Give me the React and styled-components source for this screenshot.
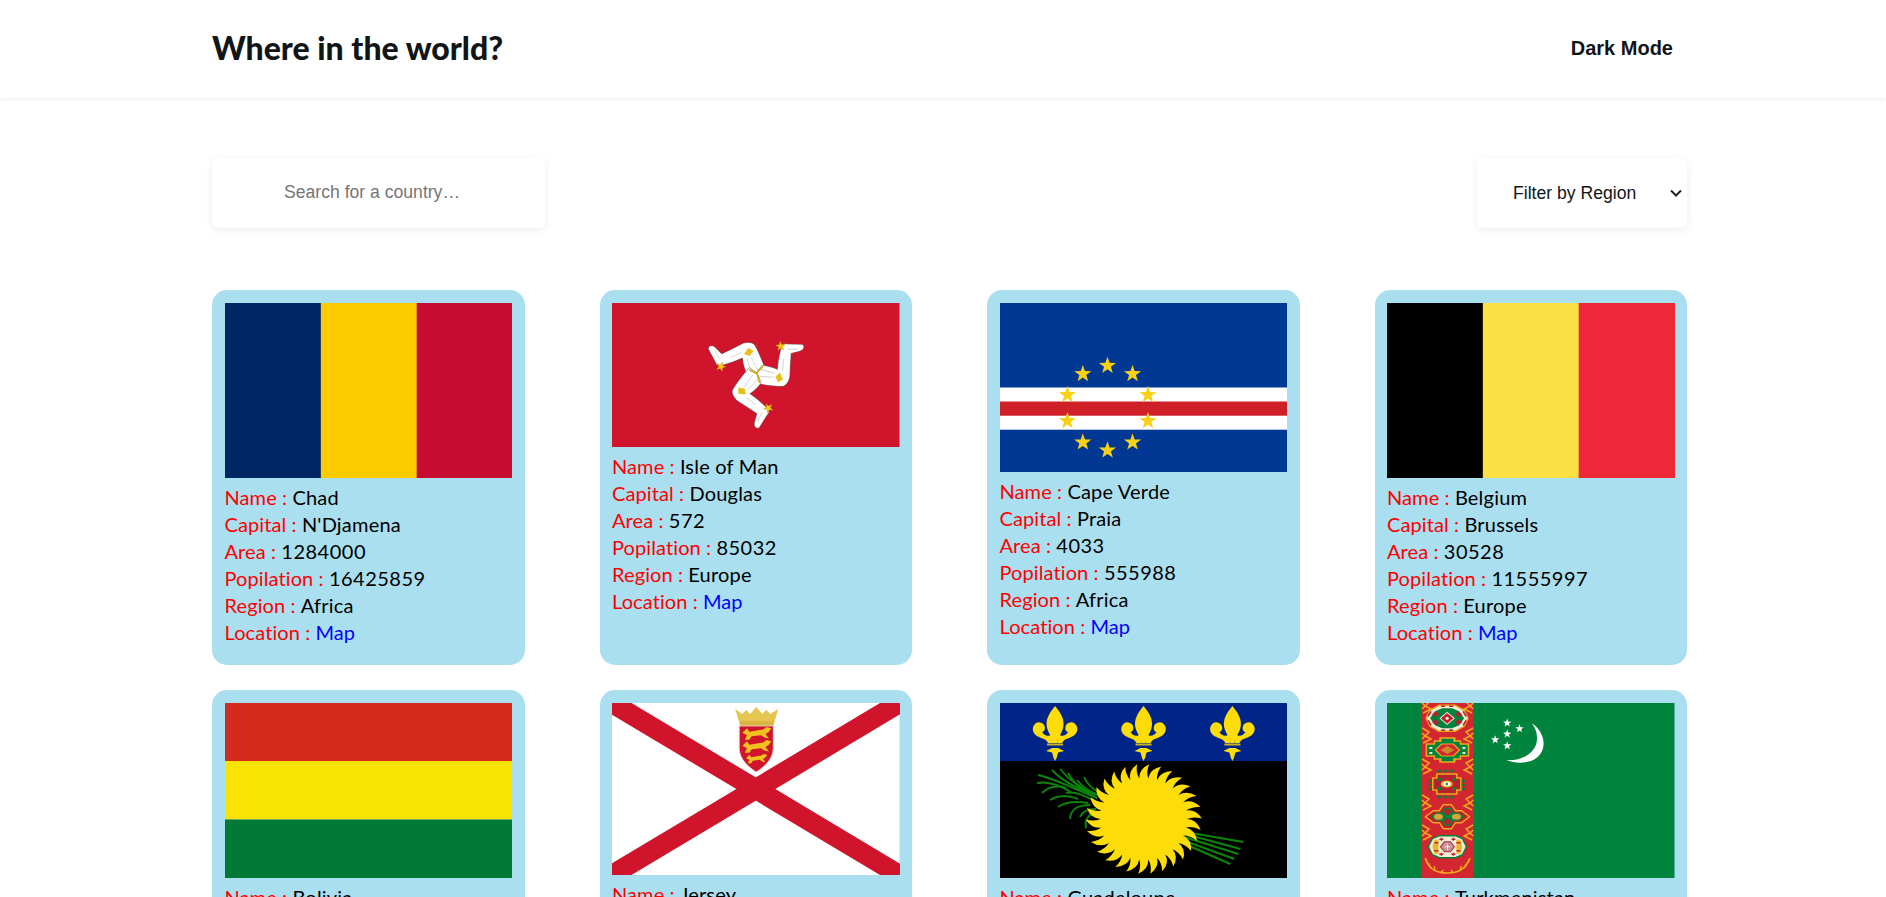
import React from "react"
import styled, { createGlobalStyle } from "styled-components"

const GlobalStyle = createGlobalStyle`
    * { box-sizing: border-box; }
    body {
        margin: 0;
        background: #fff;
        color: #000;
        font-family: "Lato", "Noto Sans", sans-serif;
    }
`
const Header = styled.header`
    height: 98px;
    padding: 0 213px 0 212px;
    display: flex;
    align-items: center;
    justify-content: space-between;
    background: #fff;
    box-shadow: 0 2px 4px rgba(0, 0, 0, 0.06);
`
const Title = styled.h1`
    margin: 0 0 4px;
    font-size: 32px;
    font-weight: 900;
    color: #111517;
`
const ModeButton = styled.button`
    margin-bottom: 2px;
    padding: 0;
    border: 0;
    background: none;
    font-family: "Liberation Sans", Arial, sans-serif;
    font-size: 20px;
    font-weight: 700;
    color: #111517;
`
const Main = styled.main`
    padding: 60px 199px 0 212px;
`
const Controls = styled.div`
    display: flex;
    justify-content: space-between;
    margin-bottom: 62px;
`
const SearchInput = styled.input`
    width: 333px;
    height: 70px;
    padding: 0 0 1px 72px;
    border: 0;
    border-radius: 6px;
    outline: none;
    background: #fff;
    box-shadow: 0 2px 9px rgba(0, 0, 0, 0.07);
    font-family: "Liberation Sans", Arial, sans-serif;
    font-size: 17.6px;
`
const SelectWrap = styled.div`
    position: relative;
    width: 210px;
    height: 70px;
`
const RegionSelect = styled.select`
    appearance: none;
    width: 100%;
    height: 100%;
    padding: 0 24px 0 36px;
    border: 0;
    border-radius: 6px;
    outline: none;
    background: #fff;
    box-shadow: 0 2px 9px rgba(0, 0, 0, 0.07);
    font-family: "Liberation Sans", Arial, sans-serif;
    font-size: 17.6px;
    color: #111517;
`
const Chevron = styled.svg`
    position: absolute;
    top: 31px;
    right: 5px;
    width: 12px;
    height: 8px;
    pointer-events: none;
`
const Grid = styled.section`
    display: grid;
    grid-template-columns: repeat(4, 1fr);
    gap: 25px 75px;
`
const Card = styled.article`
    padding: 13px 12.5px;
    border-radius: 15px;
    background: #aadff0;
`
const FlagSvg = styled.svg`
    display: block;
    width: 100%;
    height: ${props => props.$h}px;
    margin-bottom: 6px;
`
const Info = styled.div`
    padding-bottom: 6px;
    font-size: 20px;
    line-height: 27px;
`
const Line = styled.div`
    white-space: nowrap;
`
const Label = styled.span`
    color: #ff0000;
    letter-spacing: 0.1px;
`
const Value = styled.span`
    letter-spacing: ${props => (props.$number ? "0.5px" : "0.2px")};
`
const MapLink = styled.a`
    color: #0000ff;
    text-decoration: none;
`

// star polygon points, used by several of the flags
const star = (cx, cy, r, rot = 0) => {
    const pts = []
    for (let i = 0; i < 10; i++) {
        const rad = i % 2 ? r * 0.4 : r
        const a = ((i * 36 - 90 + rot) * Math.PI) / 180
        pts.push(`${(cx + rad * Math.cos(a)).toFixed(2)},${(cy + rad * Math.sin(a)).toFixed(2)}`)
    }
    return pts.join(" ")
}

const sunPath = () => {
    const n = 30
    let d = ""
    for (let i = 0; i < n; i++) {
        const a0 = (i / n) * Math.PI * 2
        const a1 = ((i + 1) / n) * Math.PI * 2
        const tip = a0 + 0.2
        const pt = (a, r) => `${(r * Math.cos(a)).toFixed(2)} ${(r * Math.sin(a)).toFixed(2)}`
        d += i === 0 ? `M${pt(a0, 43)} ` : ""
        d += `Q${pt(a0 + 0.01, 53)} ${pt(tip, 58)} Q${pt(a0 + 0.15, 50)} ${pt(a1, 43)} `
    }
    return d + "Z"
}

const Bars = ({ colors }) => (
    <FlagSvg $h={175} viewBox="0 0 287 175" preserveAspectRatio="none">
        {colors.map((c, i) => (
            <rect key={c} x={(i * 287) / 3} y="0" width={287 / 3 + 0.5} height="175" fill={c} />
        ))}
    </FlagSvg>
)

const Bolivia = () => (
    <FlagSvg $h={175} viewBox="0 0 287 175" preserveAspectRatio="none">
        <rect width="287" height="58.5" fill="#D52B1E" />
        <rect y="58" width="287" height="58.5" fill="#F9E300" />
        <rect y="116.5" width="287" height="58.5" fill="#007934" />
    </FlagSvg>
)

const LEG_PATH = "M201 127 C194 108 188 92 191 78 C170 88 150 96 127 102 L112 102 C106 88 96 72 88 56 C90 48 98 50 104 56 L124 76 C145 66 165 56 182 47 C194 39 214 38 221 48 C234 70 244 98 252 120 L228 130 Z"

const Leg = ({ rot }) => (
    <g transform={`rotate(${rot} 229 131)`}>
        <path d={LEG_PATH} fill="#fff" stroke="#777" strokeWidth="8" strokeLinejoin="round" />
        <path d={LEG_PATH} fill="#fff" stroke="#fff" strokeWidth="5" strokeLinejoin="round" />
        <path d="M191 72 L204 54 L220 62 L208 78 Z" fill="#e8c01c" />
        <path d="M200 125 L228 132 L250 118" fill="none" stroke="#d3a90f" strokeWidth="5" />
        <path d="M104 62 L119 87 M150 83 L182 68 M212 80 L232 120 M200 84 L212 125" stroke="#c4c4c4" strokeWidth="2" fill="none" />
        <polygon points={star(122, 110, 15, 20)} fill="#f5cf10" stroke="#b8860b" strokeWidth="1" />
    </g>
)

const IsleOfMan = () => (
    <FlagSvg $h={144} viewBox="0 0 287 144" preserveAspectRatio="none">
        <rect width="287" height="144" fill="#CF142B" />
        <g transform="translate(68 27) scale(0.3333)">
            <Leg rot={0} />
            <Leg rot={120} />
            <Leg rot={240} />
        </g>
    </FlagSvg>
)

const VERDE_STARS = [
    [107.3, 62.7], [82.7, 71], [132.3, 71], [67.3, 92], [147.7, 92],
    [67.3, 118], [147.7, 118], [82.7, 139.3], [132.3, 139.3], [107.3, 147.3],
]

const CapeVerde = () => (
    <FlagSvg $h={169} viewBox="0 0 287 169" preserveAspectRatio="none">
        <rect width="287" height="169" fill="#003893" />
        <rect y="84.5" width="287" height="42.2" fill="#fff" />
        <rect y="98.5" width="287" height="14.2" fill="#CF2027" />
        {VERDE_STARS.map(([x, y]) => (
            <polygon key={`${x}-${y}`} points={star(x, y, 9)} fill="#F7D116" />
        ))}
    </FlagSvg>
)

const Lion = ({ y, w }) => (
    <g transform={`translate(144 ${y}) scale(${w})`} fill="#f1c21e">
        <path d="M-12 -1 L-8 -5 L-6 -2 L6 -4 L9 -6 L13 -5 L11 -2 L8 0 L11 4 L7 3 L4 1 L-4 2 L-6 5 L-10 5 L-8 1 Z" />
    </g>
)

const Jersey = () => (
    <FlagSvg $h={172} viewBox="0 0 287 172" preserveAspectRatio="none">
        <rect width="287" height="172" fill="#fff" />
        <path d="M0 0 L287 172 M287 0 L0 172" stroke="#CF142B" strokeWidth="20" />
        <path d="M123 6 L130 11 L134 7 L138 11 L144 4 L150 11 L154 7 L158 11 L166 6 L161 23 L128 23 Z" fill="#e6c651" />
        <rect x="128" y="18" width="33" height="5" fill="#d9b63f" />
        <path d="M127 23 H161 V45 C161 56 152 64 144 69 C136 64 127 56 127 45 Z" fill="#CF142B" stroke="#f3d3d3" strokeWidth="0.8" />
        <Lion y={31} w={1.15} />
        <Lion y={44} w={1.15} />
        <Lion y={56} w={0.85} />
    </FlagSvg>
)

const Fleur = ({ x }) => {
    const side = "M2 37 L7 37 C9 33 12 33 16 31 C21 29 23 25 22 21 C20 15 14 15 11 19 C9 23 11 26 13 26 C11 30 6 31 3 28 Z"
    return (
        <g transform={`translate(${x} 3)`} fill="#FCDD09">
            <path d="M0 0 C-6 7 -10 14 -8 22 C-6 29 -2 32 -2 37 L2 37 C2 32 6 29 8 22 C10 14 6 7 0 0 Z" />
            <path d={side} />
            <path d={side} transform="scale(-1 1)" />
            <rect x="-8" y="37.5" width="16" height="2" fill="#c9b324" />
            <path d="M-9 45 L-3 42 L3 42 L9 45 L3 46.5 L1.5 52 L0 55 L-1.5 52 L-3 46.5 Z" />
        </g>
    )
}

const CANE_LEAVES = [
    "M38 72 C55 76 75 86 97 95", "M52 67 C62 78 78 86 95 92", "M60 66 C68 76 78 84 92 90",
    "M68 70 C72 78 76 82 86 88", "M77 77 C82 84 88 88 98 92", "M84 74 C87 82 92 86 100 90",
    "M37 80 C48 78 60 82 72 90", "M42 90 C48 84 56 82 66 85", "M50 97 C58 92 66 92 78 96",
    "M58 104 C66 98 76 98 88 100", "M70 116 C70 108 76 102 90 102", "M86 125 C84 118 88 112 94 110",
    "M66 90 C74 88 84 92 94 98", "M80 114 C82 108 88 106 96 106",
]

const Guadeloupe = () => (
    <FlagSvg $h={175} viewBox="0 0 287 175" preserveAspectRatio="none">
        <rect width="287" height="175" fill="#000" />
        <rect width="287" height="58" fill="#002488" />
        <Fleur x={55} />
        <Fleur x={143.3} />
        <Fleur x={232} />
        {CANE_LEAVES.map(d => (
            <path key={d} d={d} stroke="#0a840a" strokeWidth="2" fill="none" />
        ))}
        <path d="M185 129 L243 139 M185 131 L240 146 M184 134 L238 151 M182 137 L234 156 M180 139 L230 161" stroke="#0a840a" strokeWidth="2.2" fill="none" />
        <g transform="translate(143.5 116) scale(1 0.95)">
            <path d={sunPath()} fill="#FCDD09" />
        </g>
    </FlagSvg>
)

const GOLD = "#f0a81e"
const RUG_RED = "#D22630"
const RUG_GREEN = "#00843D"

const RugScrolls = ({ y }) => (
    <g stroke={GOLD} strokeWidth="1.5" fill="none">
        <path d={`M35 ${y - 7} L42 ${y - 3} L38 ${y + 1} L44 ${y + 4} L36 ${y + 8} M35 ${y - 2} L38 ${y + 1} L35 ${y + 4}`} />
        <path d={`M86 ${y - 7} L79 ${y - 3} L83 ${y + 1} L77 ${y + 4} L85 ${y + 8} M86 ${y - 2} L83 ${y + 1} L86 ${y + 4}`} />
    </g>
)

// the five carpet guls, each has its own pattern
const GulOne = () => (
    <g transform="translate(60 15.3)">
        <path d="M-21 0 L-17 -8 L-8 -13 L8 -13 L17 -8 L21 0 L17 8 L8 13 L-8 13 L-17 8 Z" fill="#f4ead8" stroke={GOLD} strokeWidth="1.4" />
        <path d="M-17 0 L-12 -7 L-5 -10 L5 -10 L12 -7 L17 0 L12 7 L5 10 L-5 10 L-12 7 Z" fill={RUG_GREEN} />
        <path d="M-15 -4 l4 -3 l3 3 l-4 3 Z M11 -7 l4 3 l-3 3 l-4 -3 Z M-15 4 l4 3 l3 -3 l-4 -3 Z M11 7 l4 -3 l-3 -3 l-4 3 Z" fill="#b5222b" />
        <path d="M-19 -2 l3 -5 M16 -7 l3 5 M-19 2 l3 5 M16 7 l3 -5 M-6 -12 h4 M2 -12 h4 M-6 12 h4 M2 12 h4" stroke="#b5222b" strokeWidth="1.6" />
        <path d="M-7 0 L0 -6 L7 0 L0 6 Z" fill="#c4202c" stroke="#f4ead8" strokeWidth="1" />
        <circle r="1.6" fill="#f4ead8" />
    </g>
)

const GulTwo = () => (
    <g transform="translate(60.3 47)">
        <path d="M-21 -6 H-13 V-9 H-7 V-12 H7 V-9 H13 V-6 H21 V6 H13 V9 H7 V12 H-7 V9 H-13 V6 H-21 Z" fill={RUG_GREEN} stroke={GOLD} strokeWidth="1.5" />
        <path d="M-7 -8 V-12 M7 -8 V-12 M-7 8 V12 M7 8 V12" stroke={GOLD} strokeWidth="2" />
        <path d="M-12 0 L-6 -6 H6 L12 0 L6 6 H-6 Z" fill={RUG_RED} stroke={GOLD} strokeWidth="1.2" />
        <path d="M-7 0 L0 -4 L7 0 L0 4 Z" fill="#c98a2a" />
        <path d="M-18 -3 h3 v2 h-3 Z M15 -3 h3 v2 h-3 Z M-18 2 h3 v2 h-3 Z M15 2 h3 v2 h-3 Z" fill="#e9e3c8" />
    </g>
)

const GulThree = () => (
    <g transform="translate(59.7 81)">
        <path d="M-18 -3 h3 M-18 1 h3 M-18 5 h3 M15 -3 h3 M15 1 h3 M15 5 h3 M-9 -13 h3 M-3 -13 h3 M3 -13 h3 M-9 13 h3 M-3 13 h3 M3 13 h3" stroke="#0c7a3c" strokeWidth="2.4" />
        <path d="M-14 -6 H-10 V-10 H10 V-6 H14 V6 H10 V10 H-10 V6 H-14 Z" fill="#b5222b" stroke={GOLD} strokeWidth="1.5" />
        <path d="M-9 -6 h3 v3 h-3 Z M6 -6 h3 v3 h-3 Z M-9 3 h3 v3 h-3 Z M6 3 h3 v3 h-3 Z" fill={RUG_GREEN} />
        <ellipse rx="6" ry="3.6" fill="#e6b428" />
        <ellipse rx="3.6" ry="2.2" fill="#fff" />
        <circle r="1.2" fill="#0c7a3c" />
    </g>
)

const GulFour = () => (
    <g transform="translate(60.3 113.7)">
        <path d="M-22 0 L-14 -6 L-8 -6 L-4 -12 H4 L8 -6 L14 -6 L22 0 L14 6 L8 6 L4 12 H-4 L-8 6 L-14 6 Z" fill="#c4202c" stroke={GOLD} strokeWidth="1.4" />
        <path d="M-17 0 L-11 -4 L-6 -4 L-3 -9 H3 L6 -4 L11 -4 L17 0 L11 4 L6 4 L3 9 H-3 L-6 4 L-11 4 Z" fill={RUG_GREEN} />
        <ellipse cx="-9" rx="4.5" ry="3" fill="#d9a33a" />
        <ellipse cx="9" rx="4.5" ry="3" fill="#d9a33a" />
        <path d="M0 -9 L4 -5 L0 -1 L-4 -5 Z M0 9 L4 5 L0 1 L-4 5 Z" fill="#b5222b" />
    </g>
)

const GulFive = () => (
    <g transform="translate(60.3 143.7)">
        <path d="M-19 0 L-15 -8 L-8 -11 L8 -11 L15 -8 L19 0 L15 8 L8 11 L-8 11 L-15 8 Z" fill="#f5ecd5" stroke={RUG_GREEN} strokeWidth="1.4" />
        <path d="M-15 0 L-13 -7 L-9 -7 L-9 7 L-13 7 Z M15 0 L13 -7 L9 -7 L9 7 L13 7 Z" fill="#eab82a" />
        <path d="M-13 -4 h4 M-13 4 h4 M9 -4 h4 M9 4 h4 M-6 -9 v3 M6 -9 v3 M-6 9 v-3 M6 9 v-3 M-8 -7.5 h4 M4 -7.5 h4 M-8 7.5 h4 M4 7.5 h4" stroke="#c4202c" strokeWidth="1.4" />
        <path d="M-7 0 L-3 -5 H3 L7 0 L3 5 H-3 Z" fill="#c8909a" stroke="#a0303a" strokeWidth="1" />
        <path d="M-3 0 H3 M0 -3 V3" stroke="#f5ecd5" strokeWidth="1" />
    </g>
)

const Wreath = () => (
    <g fill="none" stroke={GOLD} strokeWidth="1.5">
        <path d="M39 156 C41 166 50 170 60 170 C70 170 79 166 82 156" />
        <path d="M40 160 l-2 -5 M44 165 l-3 -5 M48 168 l-1 -5 M54 170 l2 -3 M81 160 l2 -5 M77 165 l3 -5 M73 168 l1 -5 M66 170 l-2 -3" />
    </g>
)

const Turkmenistan = () => (
    <FlagSvg $h={175} viewBox="0 0 287 175" preserveAspectRatio="none">
        <rect width="287" height="175" fill={RUG_GREEN} />
        <rect x="34.3" width="52.4" height="175" fill={RUG_RED} />
        {[2, 32, 63, 99, 129].map(y => <RugScrolls key={y} y={y} />)}
        <GulOne />
        <GulTwo />
        <GulThree />
        <GulFour />
        <GulFive />
        <Wreath />
        <path d="M144.5 20 C160 31 160 50 146 57 C137 61 127 60 119 57 C131 58 145 53 149 41 C151 33 149 26 144.5 20 Z" fill="#fff" />
        {[[120, 20], [132.3, 25.7], [120, 31], [108, 36.7], [120, 42.7]].map(([x, y]) => (
            <polygon key={`${x}-${y}`} points={star(x, y, 4.4)} fill="#fff" />
        ))}
    </FlagSvg>
)

const COUNTRIES = [
    { name: "Chad", capital: "N'Djamena", area: 1284000, population: 16425859, region: "Africa", flag: <Bars colors={["#002664", "#FECB00", "#C60C30"]} /> },
    { name: "Isle of Man", capital: "Douglas", area: 572, population: 85032, region: "Europe", flag: <IsleOfMan /> },
    { name: "Cape Verde", capital: "Praia", area: 4033, population: 555988, region: "Africa", flag: <CapeVerde /> },
    { name: "Belgium", capital: "Brussels", area: 30528, population: 11555997, region: "Europe", flag: <Bars colors={["#000000", "#FAE042", "#ED2939"]} /> },
    { name: "Bolivia", capital: "Sucre", area: 1098581, population: 11673029, region: "Americas", flag: <Bolivia /> },
    { name: "Jersey", capital: "Saint Helier", area: 116, population: 100800, region: "Europe", flag: <Jersey /> },
    { name: "Guadeloupe", capital: "Basse-Terre", area: 1628, population: 400132, region: "Americas", flag: <Guadeloupe /> },
    { name: "Turkmenistan", capital: "Ashgabat", area: 488100, population: 6031187, region: "Asia", flag: <Turkmenistan /> },
]

const CountryCard = ({ country }) => (
    <Card>
        {country.flag}
        <Info>
            <Line><Label>Name : </Label><Value>{country.name}</Value></Line>
            <Line><Label>Capital : </Label><Value>{country.capital}</Value></Line>
            <Line><Label>Area : </Label><Value $number>{country.area}</Value></Line>
            <Line><Label>Popilation : </Label><Value $number>{country.population}</Value></Line>
            <Line><Label>Region : </Label><Value>{country.region}</Value></Line>
            <Line><Label>Location : </Label><MapLink href="#">Map</MapLink></Line>
        </Info>
    </Card>
)

const App = () => (
    <>
        <GlobalStyle />
        <Header>
            <Title>Where in the world?</Title>
            <ModeButton>Dark Mode</ModeButton>
        </Header>
        <Main>
            <Controls>
                <SearchInput placeholder="Search for a country…" />
                <SelectWrap>
                    <RegionSelect defaultValue="">
                        <option value="">Filter by Region</option>
                        <option>Africa</option>
                        <option>Americas</option>
                        <option>Asia</option>
                        <option>Europe</option>
                        <option>Oceania</option>
                    </RegionSelect>
                    <Chevron viewBox="0 0 12 8">
                        <path d="M1 1.5 L6 6.5 L11 1.5" fill="none" stroke="#222" strokeWidth="2" />
                    </Chevron>
                </SelectWrap>
            </Controls>
            <Grid>
                {COUNTRIES.map(c => <CountryCard key={c.name} country={c} />)}
            </Grid>
        </Main>
    </>
)

export default App
